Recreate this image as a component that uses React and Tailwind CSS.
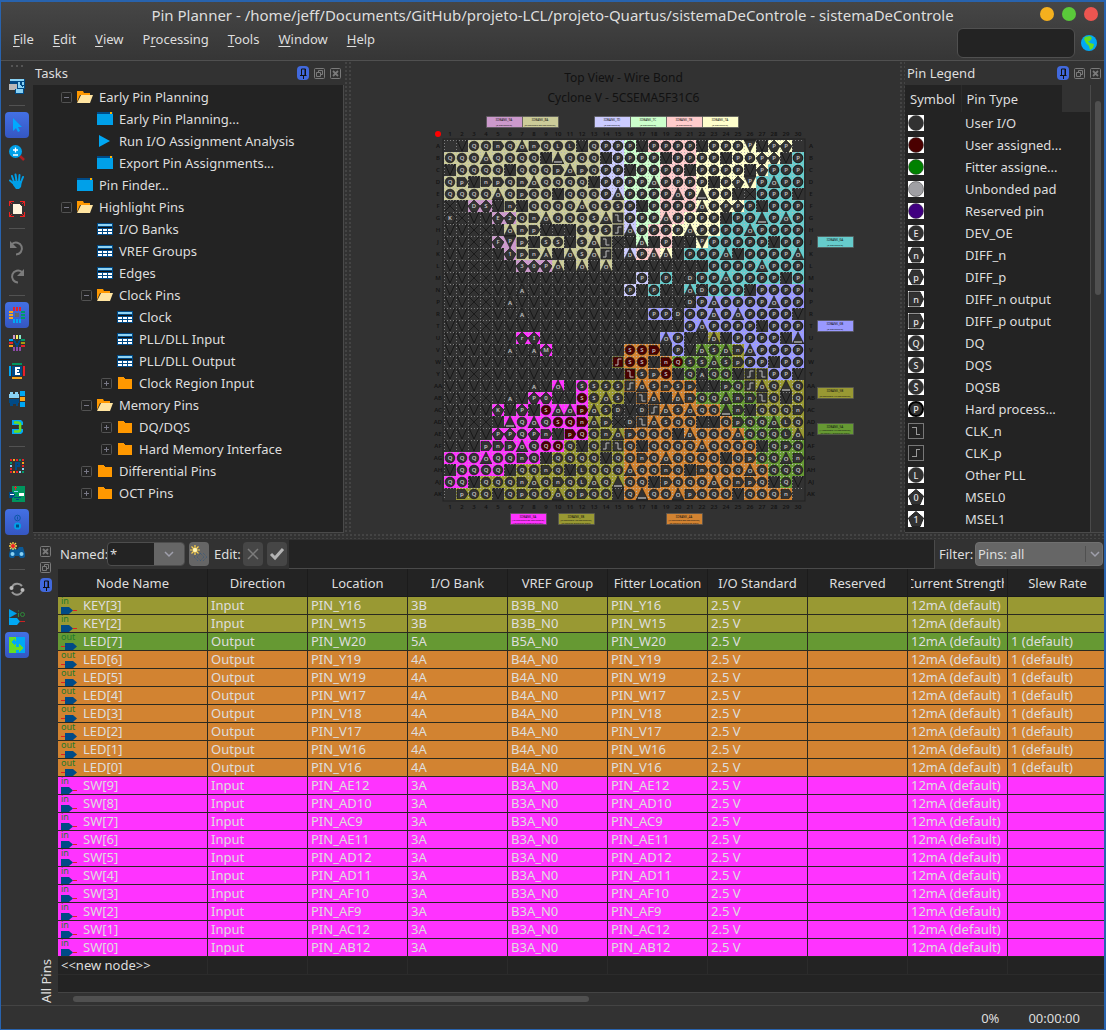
import React from "react";

const FONT = "font-['Noto_Sans','Open_Sans',sans-serif]";

/* ---------- Package view data ---------- */

const ROW_NAMES = "A B C D E F G H J K L M N P R T U V W Y AA AB AC AD AE AF AG AH AJ AK".split(" ");

const BANK_COLORS = {
  k: "#cccc99", m: "#cc99cc", l: "#ccccff", g: "#ccffcc", r: "#ffcccc", y: "#ffffcc",
  t: "#66cccc", b: "#9999ff", o: "#d28331", G: "#669933", O: "#999933", M: "#ff33ff",
};

const PINS = [
  "_vQQnQqnQLLvQPPPvPPPPvPPPuvHH_",
  "QQQqQQQQv^QQQvPPPPvPPPPvPPHHvP",
  "vQQQQvQQQpqpQPPvPPPPvPPPPvHPPP",
  "QpvnpQnqQQQQvPPPPqPPPPvPHuPqPP",
  "QQQQqQpQQvQQQPqPPPPqP^PPvxPPPv",
  "xvDTvnvQQQQqQSSPvPPPPqPHHPvPPP",
  "KxvvE2QnqQQQSqzPPPqPPPPvPP^PqP",
  "vvxxvqnpvvvSSScqPPPPqPPPPqPPPP",
  "vvxxFupvSSvSqzxvdvPvvuPPPPPvPP",
  "vvxxv1pnavqSqcvdPddvPPPqvPPPPq",
  "vvxxvv30HqvqvqvvvvvvvvPPPPqPPP",
  "vvxxvvvvvvvvvvvvPvPvDPPqPPPPvP",
  "vvxxvvavvvvvvvvPvPvvqDPPPvPPPP",
  "vvxxvavvvvvvvvvvvvvvDPqPPPPqPP",
  "vvxxvvavvvvvvvvvvPPDPPdPqPPPPv",
  "vvxxvvvvvvvvvvvvvvvvPqPPPPvPPP",
  "vvvvvvCIvvvvvvvvvvqPvvdvPPPPv^",
  "vvvvvavaMvvvvvvSSpvPvdSdnqPPPP",
  "vvvvvvvvvvvvvvcSSvnQSSqSpPPvPP",
  "vvxxvvvvvvvvvvvzSpSvQaQQvczPPv",
  "vvvvvvvavqvSSSScqSnSpvvpQcqQ^Q",
  "vvxxvavH0vvSSqSvzdvdnQQqnnzQvQ",
  "vvvvKvHvSqqpqSDvDcdSqQQ^nvQQQn",
  "vvxxv^QqQSQnqpxDzqSQQvvQpQQqLQ",
  "vvvvHHQHnvpQQnqpQQQvdQQQqQQQLq",
  "vvvpnpqQQQQvQczQvQQQQqQQQQvQpQ",
  "QQQqQQnQvQQQQvQQnQqQQQQvQpQQqn",
  "vQQQQvQQnQvLQQQqQQnQvnQQQqQQQQ",
  "QQvQQQnqQnQLqQ^QQvpQQQqQnpQvQv",
  "_pQQvQpQQqQpQQvQ^QQqpQQQvQQQn_",
];

const BANKS = [
  ".kkkkkkkkkkkkllggrrrryyyyyyyy.",
  "kkkkkkkkkkkkkllgggrrryyyyyyyyt",
  "kkkkkkkkkkkkkllgggrrryyyyyyttt",
  "kkkkkkkkkkkkkllgggrrryyyyytttt",
  "kkkkkkkkkkkkkllgggrrryyyy.tttt",
  "..mm.kkkkkkkkkklggrrryyyyttttt",
  "....mmkkkkkkkkklggrryyyytttttt",
  ".....kkkkkkkkkklgrryyyyttttttt",
  "....mmkkkk.kkk..g.r..ytttttttt",
  ".....mkkk.kkkk.lrry.tttttttttt",
  "......mmmk.k.k........tttttttt",
  "................l.t..ttttttttt",
  "...............l.t..t.ttttbbbb",
  ".....................bbbbbbbbb",
  ".................bb.bbbbbbbbbb",
  "....................bbbbbbbbbb",
  "......MM..........bb..O.bbbbbb",
  "........M......ooo.b.GGGObbbbb",
  "..............OooooGGGGGObbbbb",
  "...............Oooo.G.GG.OObbb",
  ".........M.MOOOoooooo..GGOOOOO",
  ".......MM..MOOO.oooooGGGGGOOOO",
  "....M.M.MMMMOO...ooooooGGGOOOO",
  ".....MMMMMMMOO..ooooo..oGGGGOO",
  "....MMMMMMMMOOOooooooooooGGGGO",
  "...MMMMMMMOOOOOoooooooooooGGGG",
  "MMMMMMMMOOOOOOOoooooooooooGGGG",
  ".MMMMOOOOOOOOOOooooooooooooGGG",
  "MMMOOOOOOOOOOOOooooooooooooGGG",
  ".OOOOOOOOOOOOOOoooooooooooooo.",
];

const ASSIGNED = new Set(
  "V16 V17 V18 W15 W16 W17 W19 W20 Y16 Y19 AB12 AC9 AC12 AD10 AD11 AD12 AE11 AE12 AF9 AF10".split(" ")
);

const DIAMONDS = { D: "D", T: "S", E: "E", F: "F", H: "P", C: "r", I: "I", M: "M", K: "K", 0: "0", 1: "1", 2: "2", 3: "3" };

function PinLetter({ x, y, children }) {
  return (
    <text x={x + 6} y={y + 8} fontSize="6" fontWeight="600" textAnchor="middle" fill="#c4c4c4">
      {children}
    </text>
  );
}

function Pin({ x, y, kind, color, assigned }) {
  const fill = assigned ? "#4a0000" : "#323232";
  const dark = color === undefined || kind === "v" || kind === "x" || kind === "_";
  const bg = dark ? "#323232" : color;
  let mark = null;
  if (kind === "v") {
    mark = <path d={`M${x + 1} ${y}L${x + 6} ${y + 11}L${x + 11} ${y}`} fill="none" stroke="#111" strokeWidth="0.8" />;
  } else if (kind === "x") {
    mark = <path d={`M${x + 1} ${y + 1}l10 10M${x + 11} ${y + 1}l-10 10`} stroke="#111" strokeWidth="0.7" />;
  } else if (kind === "q" || kind === "d" || kind === "a" || kind === "^") {
    const letter = { q: "O", d: "D", a: "A" }[kind];
    mark = (
      <>
        <path d={`M${x} ${y + 12}L${x + 6} ${y}L${x + 12} ${y + 12}z`} fill={fill} stroke="#111" strokeWidth="0.6" />
        {letter ? <PinLetter x={x} y={y + 1}>{letter}</PinLetter> : <rect x={x + 2} y={y + 9} width="8" height="2" fill="#888" />}
      </>
    );
  } else if (kind === "u") {
    mark = (
      <>
        <path d={`M${x} ${y}L${x + 6} ${y + 12}L${x + 12} ${y}z`} fill={fill} stroke="#111" strokeWidth="0.6" />
        <PinLetter x={x} y={y - 1}>P</PinLetter>
      </>
    );
  } else if (kind === "z" || kind === "c") {
    mark = (
      <>
        <rect x={x + 1} y={y + 1} width="10" height="10" fill={fill} stroke="#222" strokeWidth="0.8" />
        <path d={kind === "z" ? `M${x + 3} ${y + 3}h3v6h3.500` : `M${x + 3} ${y + 9}h3v-6h3.500`} fill="none" stroke="#bbb" />
      </>
    );
  } else if (kind === "n" || kind === "p") {
    mark = (
      <>
        <path d={`M${x + 1} ${y + 1.5}h8l3 4.500l-3 4.500h-8z`} fill={fill} stroke="#111" strokeWidth="0.6" />
        <PinLetter x={x} y={y}>{kind}</PinLetter>
      </>
    );
  } else if (DIAMONDS[kind]) {
    mark = (
      <>
        <path d={`M${x + 6} ${y}L${x + 12} ${y + 6}L${x + 8.5} ${y + 12}h-5L${x} ${y + 6}z`} fill={fill} stroke="#111" strokeWidth="0.6" />
        <PinLetter x={x} y={y}>{DIAMONDS[kind]}</PinLetter>
      </>
    );
  } else if (kind !== "_") {
    mark = (
      <>
        <circle cx={x + 6} cy={y + 6} r="4.800" fill={fill} stroke="#151515" strokeWidth={kind === "P" ? 1 : 0.7} />
        <PinLetter x={x} y={y}>{kind}</PinLetter>
      </>
    );
  }
  return (
    <g>
      <rect x={x} y={y} width="12" height="12" fill={bg} />
      <path d={`M${x} ${y + 0.5}h12M${x + 0.5} ${y}v12`} stroke={dark ? "#808080" : "#b4b4b4"} strokeDasharray="1 2" />
      {mark}
    </g>
  );
}

const BANK_LABELS = [
  [92, 4, "m", "9A", "(0 assignable)"],
  [128, 4, "k", "8A", "(0 assigned/80 assignable)"],
  [200, 4, "l", "7D", "(0 assignable)"],
  [236, 4, "g", "7C", "(0 assignable)"],
  [272, 4, "r", "7B", "(0 assignable)"],
  [308, 4, "y", "7A", "(0 assignable)"],
  [423, 124, "t", "6A", "(0 assignable)"],
  [423, 208, "b", "6B", "(0 assignable)"],
  [423, 275, "O", "5B", "(0 assigned/16 assignable)"],
  [423, 311, "G", "5A", "(1 assigned/16 assignable)", "(0 input/1 output/0 bidir)"],
  [116, 401, "M", "3A", "(10 assigned/32 assignable)", "(10 input/0 output/0 bidir)"],
  [164, 401, "O", "3B", "(2 assigned/48 assignable)", "(2 input/0 output/0 bidir)"],
  [272, 401, "o", "4A", "(7 assigned/80 assignable)", "(0 input/7 output/0 bidir)"],
];

function PackageView() {
  return (
    <svg viewBox="0 0 460 418" className="h-[418px] w-[460px] shrink-0" role="img" aria-label="Package top view">
      {BANK_LABELS.map(([x, y, c, name, ...lines]) => (
        <g key={name}>
          <rect x={x + 0.5} y={y + 0.5} width="36" height="11" fill={BANK_COLORS[c]} stroke="#555" strokeWidth="0.7" />
          <text x={x + 18} y={y + 4.5} fontSize="3" textAnchor="middle" fill="#111">{"IOBANK_" + name}</text>
          {lines.map((line, i) => (
            <text key={line} x={x + 18} y={y + (lines.length > 1 ? 7.5 : 9.5) + i * 3} fontSize="2.500" textAnchor="middle" fill="#111">
              {line}
            </text>
          ))}
        </g>
      ))}
      <circle cx="44" cy="22" r="3" fill="#ff0000" />
      <rect x="49" y="27" width="362" height="362" fill="#323232" stroke="#222" />
      {ROW_NAMES.map((name, i) => (
        <g key={name} fontSize="6" fontWeight="600" textAnchor="middle" fill="#141414">
          <text x={56 + i * 12} y="24">{i + 1}</text>
          <text x={56 + i * 12} y="397">{i + 1}</text>
          <text x="44" y={36 + i * 12}>{name}</text>
          <text x="417" y={36 + i * 12}>{name}</text>
        </g>
      ))}
      {PINS.map((line, r) =>
        [...line].map((kind, c) => (
          <Pin
            key={r + "-" + c}
            x={50 + c * 12}
            y={28 + r * 12}
            kind={kind}
            color={BANK_COLORS[BANKS[r][c]]}
            assigned={ASSIGNED.has(ROW_NAMES[r] + (c + 1))}
          />
        ))
      )}
    </svg>
  );
}

/* ---------- Icons ---------- */

function Ico({ children, className = "h-4 w-4", crisp = true }) {
  return (
    <svg viewBox="0 0 16 16" className={className + " shrink-0"} shapeRendering={crisp ? "crispEdges" : "auto"} aria-hidden="true">
      {children}
    </svg>
  );
}

const FolderOpen = () => (
  <Ico crisp={false}>
    <path d="M0 2h6l1 2h6v2H3L0 13z" fill="#ff9800" />
    <path d="M4 6h12l-3 8H0z" fill="#ffe4a0" />
  </Ico>
);
const Folder = () => (
  <Ico><path d="M1 2h6l1 2h7v10H1z" fill="#ff9800" /></Ico>
);
const Dialog = () => (
  <Ico>
    <rect y="1" width="16" height="13" fill="#00a0e9" />
    <rect y="1" width="16" height="2" fill="#004a86" />
    <rect x="13" y="1" width="2" height="2" fill="#ffb000" />
  </Ico>
);
const Play = () => (
  <Ico crisp={false}><path d="M2 2l11 6-11 6z" fill="#00a8f4" /></Ico>
);
const Grid = () => (
  <Ico>
    <rect y="2" width="16" height="12" fill="#004a86" />
    <path d="M1 3h14v2H1z" fill="#90d4f4" />
    <path d="M1 6h14v1H1z" fill="#111" />
    <path d="M1 8h4v2H1zM6 8h4v2H6zM11 8h4v2h-4zM1 11h4v2H1zM6 11h4v2H6zM11 11h4v2h-4z" fill="#fff" />
  </Ico>
);

const TOOL_ICONS = {
  "Detach window": (
    <Ico>
      <path d="M1 1h15v10H1z" fill="#004a86" /><path d="M1 1h14v2H1zM9 4h6v6H9z" fill="#8ad2f4" />
      <path d="M0 6h8v6H0z" fill="#b8b8b8" /><path d="M7 3h5v1h1v3h2v1h-1v1h-1V8h-1V7h-1V4H7z" fill="#004a86" />
      <path d="M6 11h9v5H6z" fill="#004a86" /><path d="M7 11h7v4H7z" fill="#8ad2f4" />
    </Ico>
  ),
  "Selection tool": <Ico crisp={false}><path d="M4 1v13l3-3 2 4 2-1-2-4h4z" fill="#00a8ff" /></Ico>,
  "Zoom tool": (
    <Ico crisp={false}>
      <path d="M11 11l4 4" stroke="#b02020" strokeWidth="2.500" /><circle cx="6.500" cy="6.500" r="6.500" fill="#00a0e9" />
      <path d="M4 5h5M6.500 2.500v5M4 10h5" stroke="#fff" strokeWidth="1.300" />
    </Ico>
  ),
  "Hand tool": (
    <Ico crisp={false}>
      <g stroke="#00a0e9" strokeWidth="2" strokeLinecap="round"><path d="M5 9L3 3M7.500 8L6.500 1.500M10 8l.5-6M12 9l2-5M5 11L1 7.500" /></g>
      <path d="M4 8h9l-1 6-2 2H7l-3-4z" fill="#00a0e9" />
    </Ico>
  ),
  "Fit in window": (
    <Ico>
      <path d="M4 3h6l3 3v7H4z" fill="#fff3dc" />
      <path d="M0 0h5v1H2v1h1v1H2V2H1v3H0zM16 0h-5v1h3v1h-1v1h1V2h1v3h1zM0 16h5v-1H2v-1h1v-1H2v1H1v-3H0zM16 16h-5v-1h3v-1h-1v-1h1v1h1v-3h1z" fill="#e22" />
    </Ico>
  ),
  Undo: <Ico crisp={false}><path d="M3 4a6 6 0 1 1 4 10.500" fill="none" stroke="#7b7b7b" strokeWidth="2" /><path d="M1 1v7h7z" fill="#7b7b7b" /></Ico>,
  Redo: <Ico crisp={false}><path d="M13 4a6 6 0 1 0-4 10.500" fill="none" stroke="#7b7b7b" strokeWidth="2" /><path d="M15 1v7H8z" fill="#7b7b7b" /></Ico>,
  "Show I/O banks": (
    <Ico>
      <path d="M4 0h2v4H4zM7 0h2v4H7zM10 0h2v4h-2z" fill="#e8202a" /><path d="M4 12h2v4H4zM7 12h2v4H7zM10 12h2v4h-2z" fill="#00a8f4" />
      <path d="M0 4h4v2H0zM0 7h4v2H0zM0 10h4v2H0z" fill="#f9a51a" /><path d="M12 4h4v2h-4zM12 7h4v2h-4zM12 10h4v2h-4z" fill="#009a6a" />
      <path d="M6 6h4v4H6z" fill="#666" />
    </Ico>
  ),
  "Show VREF groups": (
    <Ico>
      <path d="M4 0h2v4H4z" fill="#c9c" /><path d="M7 0h2v4H7z" fill="#fe6" /><path d="M10 0h2v4h-2z" fill="#8ec" />
      <path d="M4 12h2v4H4zM7 12h2v4H7zM10 12h2v4h-2z" fill="#8e4aa8" /><path d="M0 4h4v2H0z" fill="#00a8f4" />
      <path d="M0 7h4v2H0z" fill="#e8202a" /><path d="M0 10h4v2H0z" fill="#f9a51a" /><path d="M12 4h4v2h-4z" fill="#009a6a" />
      <path d="M12 7h4v2h-4z" fill="#aa9a10" /><path d="M12 10h4v2h-4z" fill="#e8202a" /><path d="M5 5l3 6 3-6" fill="none" stroke="#004a86" strokeWidth="1.500" />
    </Ico>
  ),
  "Show edges": (
    <Ico>
      <path d="M3 0h10v2H3z" fill="#00965e" /><path d="M3 14h10v2H3z" fill="#f9a51a" /><path d="M0 3h2v10H0z" fill="#00a8f4" />
      <path d="M14 3h2v10h-2z" fill="#e8202a" /><path d="M3 3h10v10H3z" fill="#004a86" /><path d="M6 4h5v2H8v1h2v2H8v1h3v2H6z" fill="#fff" />
    </Ico>
  ),
  "Show DQ/DQS pins": (
    <Ico>
      <path d="M1 1h3v2h2V1h3v2h1v4H0V3h1z" fill="#8ad2f4" /><path d="M0 8h10v4H9v3H7v-2H4v2H1v-3H0z" fill="#004a86" />
      <path d="M11 0h5v5h-5zM11 11h5v5h-5z" fill="#00a8f4" /><path d="M11 6h5v4h-5z" fill="#f9a51a" />
    </Ico>
  ),
  "Show pin connections": (
    <Ico crisp={false}>
      <path d="M3 1h9l2 2v3H3zM3 10h11v3l-2 2H3z" fill="#00a8f4" />
      <path d="M5 3.500h4q3 0 2 4.500q1 4.500-2 4.500H5" fill="none" stroke="#66dd22" strokeWidth="2.500" />
    </Ico>
  ),
  "Show pin migration": (
    <Ico>
      <path d="M1 1h2v2H1zM7 1h2v2H7zM13 1h2v2h-2zM13 7h2v2h-2zM1 10h2v2H1zM7 13h2v2H7zM1 13h2v2H1z" fill="#e8202a" />
      <path d="M4 1h2v2H4zM13 4h2v2h-2zM4 13h2v2H4z" fill="#f9a51a" />
      <path d="M10 1h2v2h-2zM1 4h2v2H1zM13 13h2v2h-2z" fill="#009a6a" />
      <path d="M1 7h2v2H1zM13 10h2v2h-2zM10 13h2v2h-2z" fill="#8ad2f4" />
      <path d="M6 4h5v5H8v3H6z" fill="#004a86" /><path d="M8 6h1v1H8z" fill="#323232" />
    </Ico>
  ),
  "Live I/O check": (
    <Ico>
      <path d="M3 0h13v16H3z" fill="#00965e" /><path d="M5 1h3v1H5zM6 0h1v4H6z" fill="#e8202a" /><path d="M0 6h3l3 3-3 3H0z" fill="#004a86" />
      <path d="M1 8h4v1H1zM10 7h5v3h-5z" fill="#fff" /><path d="M5 11h7v1H5zM7 13h3v1H7z" fill="#004a86" /><path d="M5 5h4v1H5z" fill="#8ad2f4" />
    </Ico>
  ),
  "Show differential pin pairs": (
    <Ico crisp={false}>
      <circle cx="8.500" cy="4" r="2.800" fill="none" stroke="#0a58a8" /><path d="M8.500 2.500v3" stroke="#0a58a8" />
      <circle cx="8.500" cy="12" r="3.500" fill="#00a0e9" /><path d="M7 10.500h3v3H7z" fill="#004a86" />
    </Ico>
  ),
  "Node finder": (
    <Ico crisp={false}>
      <path d="M2 5h4l2 3 2-3h4l2 7a3 3 0 0 1-6 2H6a3 3 0 0 1-6-2z" fill="#0a5a98" />
      <circle cx="3.500" cy="12" r="2" fill="#8ad2f4" /><circle cx="12.500" cy="12" r="2" fill="#8ad2f4" />
      <path d="M4 0v8M0 4h8M1 1l6 6M7 1L1 7" stroke="#ffd34a" strokeWidth="1.300" /><circle cx="4" cy="4" r="2" fill="#e8202a" />
    </Ico>
  ),
  Refresh: (
    <Ico crisp={false}>
      <path d="M3 6a6 6 0 0 1 10-1M13 11a6 6 0 0 1-10 0" fill="none" stroke="#999" strokeWidth="2" />
      <circle cx="2.500" cy="7" r="2" fill="#bbb" /><circle cx="13.500" cy="9" r="2" fill="#bbb" />
    </Ico>
  ),
  "Show fitter placements": (
    <Ico crisp={false}>
      <path d="M0 0l8 4.500L0 9z" fill="#00a0e9" /><path d="M0 9h8l3 3.500-3 3.500H0z" fill="#00a8f4" /><path d="M11 12.500h5" stroke="#c22" />
      <path d="M9.500 4v4M9.500 1.500v1" stroke="#2e8b3a" /><circle cx="13.500" cy="5.500" r="2" fill="none" stroke="#2e8b3a" />
    </Ico>
  ),
  "Back-annotate": (
    <Ico>
      <path d="M0 0h16v16H0z" fill="#00a8f4" /><path d="M0 0h7v16H0z" fill="#66dd22" />
      <path d="M2 5l4-4v3h3v3H6v2z" fill="#00a8f4" /><path d="M14 11l-4-4v3H6v3h4v2z" fill="#66dd22" />
    </Ico>
  ),
};

const TOOLBAR = [
  "Detach window", null, "Selection tool", "Zoom tool", "Hand tool", "Fit in window", null, "Undo", "Redo", null,
  "Show I/O banks", "Show VREF groups", "Show edges", "Show DQ/DQS pins", "Show pin connections", null,
  "Show pin migration", "Live I/O check", "Show differential pin pairs", "Node finder", null,
  "Refresh", "Show fitter placements", "Back-annotate",
];
const ACTIVE = new Set(["Selection tool", "Show I/O banks", "Show differential pin pairs", "Back-annotate"]);

const PinButton = () => (
  <button type="button" aria-label="Pin panel" className="flex h-3.5 w-3 items-center justify-center rounded-sm bg-[#4169dd]">
    <svg viewBox="0 0 12 14" className="h-3.5 w-3" aria-hidden="true">
      <path d="M4.500 9V3h4v6M3 9.500h6.500M6.500 9.500V13" fill="none" stroke="#101010" /><path d="M8 3v6" stroke="#101010" />
    </svg>
  </button>
);
const FloatButton = () => (
  <button type="button" aria-label="Float panel" className="h-[11px] w-[11px]">
    <svg viewBox="0 0 11 11" className="block" aria-hidden="true">
      <rect x=".5" y=".5" width="10" height="10" rx="1" fill="none" stroke="#7a7a7a" />
      <path d="M4.500 4V2.500h4v4H7M2.500 4.500h4v4h-4z" fill="none" stroke="#7a7a7a" />
    </svg>
  </button>
);
const CloseButton = () => (
  <button type="button" aria-label="Close panel" className="h-[11px] w-[11px]">
    <svg viewBox="0 0 11 11" className="block" aria-hidden="true">
      <rect x=".5" y=".5" width="10" height="10" rx="1" fill="none" stroke="#7a7a7a" />
      <path d="M3 3l5 5M8 3l-5 5" stroke="#7a7a7a" strokeWidth="1.800" />
    </svg>
  </button>
);

function PanelTitle({ children }) {
  return (
    <div className="flex h-6 items-center justify-between pr-[3px] pl-0.5">
      <h2>{children}</h2>
      <div className="flex items-center gap-[5px]">
        <PinButton /><FloatButton /><CloseButton />
      </div>
    </div>
  );
}

/* ---------- Tasks ---------- */

const TASKS = [
  [0, "-", "Early Pin Planning"], [1, "dialog", "Early Pin Planning..."], [1, "play", "Run I/O Assignment Analysis"],
  [1, "dialog", "Export Pin Assignments..."], [0, "dialog", "Pin Finder..."], [0, "-", "Highlight Pins"],
  [1, "grid", "I/O Banks"], [1, "grid", "VREF Groups"], [1, "grid", "Edges"], [1, "-", "Clock Pins"],
  [2, "grid", "Clock"], [2, "grid", "PLL/DLL Input"], [2, "grid", "PLL/DLL Output"], [2, "+", "Clock Region Input"],
  [1, "-", "Memory Pins"], [2, "+", "DQ/DQS"], [2, "+", "Hard Memory Interface"],
  [1, "+", "Differential Pins"], [1, "+", "OCT Pins"],
];
const TASK_ICONS = { "-": <FolderOpen />, "+": <Folder />, dialog: <Dialog />, play: <Play />, grid: <Grid /> };
const INDENTS = ["pl-7", "pl-12", "pl-[68px]"];

function Expander({ kind, name }) {
  return (
    <button type="button" aria-label={(kind === "-" ? "Collapse " : "Expand ") + name} className="h-[11px] w-[11px] shrink-0">
      <svg viewBox="0 0 11 11" className="block" aria-hidden="true">
        <rect x=".5" y=".5" width="10" height="10" rx="1" fill="none" stroke="#525252" />
        <path d={kind === "-" ? "M3 5.500h5" : "M3 5.500h5M5.500 3v5"} stroke="#777785" />
      </svg>
    </button>
  );
}

function Tasks() {
  return (
    <section className="flex w-[311px] shrink-0 flex-col">
      <PanelTitle>Tasks</PanelTitle>
      <ul className="flex-1 border-r border-b border-[#4a4a4a] bg-[#232323] pt-px">
        {TASKS.map(([level, kind, name]) => (
          <li key={name} className={"flex h-[22px] items-center " + INDENTS[level]}>
            {kind === "-" || kind === "+" ? <Expander kind={kind} name={name} /> : <span className="w-[11px]" />}
            <span className="ml-[5px] flex">{TASK_ICONS[kind]}</span>
            <span className="ml-1.5">{name}</span>
          </li>
        ))}
      </ul>
    </section>
  );
}

/* ---------- Legend ---------- */

const LEGEND = [
  ["circle", "", "User I/O"], ["circle", "", "User assigned...", "#4a0000"], ["circle", "", "Fitter assigne...", "#008000"],
  ["circle", "", "Unbonded pad", "#a0a0a4"], ["circle", "", "Reserved pin", "#400080"], ["circle", "E", "DEV_OE"],
  ["hex", "n", "DIFF_n"], ["hex", "p", "DIFF_p"], ["tag", "n", "DIFF_n output"], ["tag", "p", "DIFF_p output"],
  ["circle", "Q", "DQ"], ["circle", "S", "DQS"], ["circle", "S\u0304", "DQSB"], ["ring", "P", "Hard process..."],
  ["clkn", "", "CLK_n"], ["clkp", "", "CLK_p"], ["circle", "L", "Other PLL"], ["penta", "0", "MSEL0"], ["penta", "1", "MSEL1"],
];

function LegendSymbol({ shape, letter, fill = "#323232" }) {
  if (shape === "clkn" || shape === "clkp") {
    return (
      <Ico className="block h-4 w-4">
        <rect x=".5" y=".5" width="15" height="15" fill="#232323" stroke="#777" />
        <path d={shape === "clkn" ? "M4 4.500h4v7h4" : "M4 11.500h4v-7h4"} fill="none" stroke="#999" />
      </Ico>
    );
  }
  const paths = { hex: "M4 1h8l3.500 7-3.500 7H4L.5 8z", tag: "M1 1h11l3.500 7-3.500 7H1z", penta: "M8 .5L15.500 7 12 15.500H4L.5 7z" };
  return (
    <Ico className="block h-4 w-4" crisp={false}>
      <rect width="16" height="16" fill="#fff" />
      {paths[shape] ? (
        <path d={paths[shape]} fill={fill} stroke="#222" />
      ) : (
        <circle cx="8" cy="8" r={shape === "ring" ? 7 : 7.5} fill={fill} stroke={shape === "ring" ? "#000" : "#333"} strokeWidth={shape === "ring" ? 2 : 0.5} />
      )}
      <text x="8" y="11.500" fontSize="9" fontWeight="500" textAnchor="middle" fill="#e8e8e8">{letter}</text>
    </Ico>
  );
}

function Legend() {
  return (
    <section className="flex w-[199px] shrink-0 flex-col">
      <PanelTitle>Pin Legend</PanelTitle>
      <div className="flex flex-1 border-b border-[#4a4a4a]">
        <div className="flex-1 border-r border-[#4a4a4a] bg-[#232323]">
          <table className="w-full table-fixed">
            <colgroup><col className="w-14" /><col className="w-[101px]" /><col /></colgroup>
            <thead>
              <tr className="h-[27px] text-left">
                <th className="border-r border-[#2b2b2b] pl-[5px] font-normal">Symbol</th>
                <th className="pl-[5px] font-normal">Pin Type</th>
                <th className="bg-[#323232]"><span className="sr-only">Notes</span></th>
              </tr>
            </thead>
            <tbody>
              {LEGEND.map(([shape, letter, name, fill]) => (
                <tr key={name} className="h-[22px]">
                  <td className="pl-[3px]"><LegendSymbol shape={shape} letter={letter} fill={fill} /></td>
                  <td className="pl-1 whitespace-nowrap" colSpan={2}>{name}</td>
                </tr>
              ))}
            </tbody>
          </table>
        </div>
        <div className="w-[13px] pt-4 pl-1">
          <div className="h-[194px] w-1.5 rounded-full bg-[#505050]" />
        </div>
      </div>
    </section>
  );
}

/* ---------- All pins table ---------- */

const row = (name, dir, loc, bank) => ({ name, dir, loc, bank });
const NODES = [
  row("KEY[3]", "Input", "PIN_Y16", "3B"), row("KEY[2]", "Input", "PIN_W15", "3B"),
  row("LED[7]", "Output", "PIN_W20", "5A"), row("LED[6]", "Output", "PIN_Y19", "4A"),
  row("LED[5]", "Output", "PIN_W19", "4A"), row("LED[4]", "Output", "PIN_W17", "4A"),
  row("LED[3]", "Output", "PIN_V18", "4A"), row("LED[2]", "Output", "PIN_V17", "4A"),
  row("LED[1]", "Output", "PIN_W16", "4A"), row("LED[0]", "Output", "PIN_V16", "4A"),
  row("SW[9]", "Input", "PIN_AE12", "3A"), row("SW[8]", "Input", "PIN_AD10", "3A"),
  row("SW[7]", "Input", "PIN_AC9", "3A"), row("SW[6]", "Input", "PIN_AE11", "3A"),
  row("SW[5]", "Input", "PIN_AD12", "3A"), row("SW[4]", "Input", "PIN_AD11", "3A"),
  row("SW[3]", "Input", "PIN_AF10", "3A"), row("SW[2]", "Input", "PIN_AF9", "3A"),
  row("SW[1]", "Input", "PIN_AC12", "3A"), row("SW[0]", "Input", "PIN_AB12", "3A"),
];
const ROW_BG = { "3B": "bg-[#999933]", "5A": "bg-[#669933]", "4A": "bg-[#d28331]", "3A": "bg-[#ff33ff]" };
const COLUMNS = ["Node Name", "Direction", "Location", "I/O Bank", "VREF Group", "Fitter Location", "I/O Standard", "Reserved", "Current Strength", "Slew Rate"];

function DirIcon({ dir }) {
  const out = dir === "Output";
  return (
    <svg viewBox="0 0 18 17" className="h-[17px] w-[18px] shrink-0" aria-hidden="true">
      <text x="0" y="7" fontSize="9" fill="#1f7a2c">{out ? "out" : "in"}</text>
      <path d={out ? "M4 10h8l4 3.500-4 3.500H4z" : "M0 10h8l4 3.500-4 3.500H0z"} fill="#004a86" />
      <path d={out ? "M0 13.500h4" : "M12 13.500h4"} stroke="#e02020" />
    </svg>
  );
}

function NodeTable() {
  return (
    <div className="overflow-hidden bg-[#232323]">
      <table className="w-[1050px] table-fixed border-separate border-spacing-0">
        <colgroup>
          <col className="w-[150px]" />
          {COLUMNS.slice(1).map((c) => <col key={c} className="w-[100px]" />)}
        </colgroup>
        <thead>
          <tr className="h-7">
            {COLUMNS.map((c) => (
              <th key={c} className="overflow-hidden border-r border-b border-[#1b1b1b] p-0 font-normal whitespace-nowrap">
                <span className="mx-[3px] flex justify-center overflow-hidden">{c}</span>
              </th>
            ))}
          </tr>
        </thead>
        <tbody className="text-[#dedede]">
          {NODES.map((n) => (
            <tr key={n.name} className={"h-[18px] leading-[17px] *:overflow-hidden *:border-r *:border-b *:border-[#2a2a20] *:p-0 *:pl-[3px] *:whitespace-nowrap " + ROW_BG[n.bank]}>
              <td><span className="flex h-[17px] items-center gap-1"><DirIcon dir={n.dir} />{n.name}</span></td>
              <td>{n.dir}</td>
              <td>{n.loc}</td>
              <td>{n.bank}</td>
              <td>{"B" + n.bank + "_N0"}</td>
              <td>{n.loc}</td>
              <td>2.5 V</td>
              <td />
              <td>12mA (default)</td>
              <td>{n.dir === "Output" ? "1 (default)" : ""}</td>
            </tr>
          ))}
          <tr className="h-[18px] leading-[17px] *:border-r *:border-b *:border-[#2b2b2b] *:p-0 *:pl-[3px]">
            <td>{"<<new node>>"}</td>
            {COLUMNS.slice(1).map((c) => <td key={c} />)}
          </tr>
        </tbody>
      </table>
    </div>
  );
}

const SMALL_BUTTON = "flex h-6 w-5 items-center justify-center rounded bg-[#464646]";

function EditBar() {
  return (
    <div className="flex h-[30px] items-center">
      <label htmlFor="named" className="ml-0.5 w-[47px]">Named:</label>
      <div className="flex h-6 w-[78px] overflow-hidden rounded border border-[#4d4d4d] bg-[#232323]">
        <input id="named" defaultValue="*" className="min-w-0 flex-1 bg-transparent pl-0.5 outline-none" />
        <button type="button" aria-label="Show name filters" className="flex w-[30px] items-center justify-center bg-[#666]">
          <svg viewBox="0 0 10 7" className="h-[7px] w-2.5" aria-hidden="true"><path d="M1 1l4 4 4-4" fill="none" stroke="#a0a0ac" strokeWidth="1.500" /></svg>
        </button>
      </div>
      <button type="button" aria-label="Node finder" className="ml-1 flex h-6 w-5 items-center justify-center rounded bg-[#666]">
        <svg viewBox="0 0 18 18" className="h-[18px] w-[18px]" aria-hidden="true">
          <path d="M8 8l-4 4 4 4M11 8l-4 4 4 4M10 8l4 4-4 4M13 8l4 4-4 4" fill="none" stroke="#3d5a78" strokeDasharray="1 1" />
          <path d="M5 0v10M0 5h10M1.500 1.500l7 7M8.500 1.500l-7 7" stroke="#ffd34a" strokeWidth="1.200" /><circle cx="5" cy="5" r="2" fill="#fff8c0" />
        </svg>
      </button>
      <label htmlFor="edit" className="ml-[5px] w-[29px]">Edit:</label>
      <button type="button" aria-label="Cancel edit" className={SMALL_BUTTON}>
        <svg viewBox="0 0 12 12" className="h-3 w-3" aria-hidden="true"><path d="M1 1l10 10M11 1L1 11" stroke="#7c7c7c" strokeWidth="1.500" /></svg>
      </button>
      <button type="button" aria-label="Accept edit" className={SMALL_BUTTON + " ml-1"}>
        <svg viewBox="0 0 16 14" className="h-3.5 w-4" aria-hidden="true"><path d="M2 7l4 4 8-9" fill="none" stroke="#b4b4b4" strokeWidth="3" /></svg>
      </button>
      <input id="edit" className="ml-0.5 h-[29px] min-w-0 flex-1 border-r border-b border-[#4a4a4a] bg-[#232323] outline-none" />
      <label htmlFor="filter" className="ml-1 w-9">Filter:</label>
      <div className="relative mr-px h-6 w-32">
        <select id="filter" className="h-6 w-full appearance-none rounded border border-[#707070] bg-[#666] pl-0.5 outline-none">
          <option>Pins: all</option>
        </select>
        <span className="pointer-events-none absolute inset-y-1 right-0 flex w-[18px] items-center justify-center border-l border-[#505050]">
          <svg viewBox="0 0 10 7" className="h-[7px] w-2.5" aria-hidden="true"><path d="M1 1l4 4 4-4" fill="none" stroke="#a0a0ac" strokeWidth="1.500" /></svg>
        </span>
      </div>
    </div>
  );
}

const MENU = [["", "F", "ile"], ["", "E", "dit"], ["", "V", "iew"], ["P", "r", "ocessing"], ["", "T", "ools"], ["", "W", "indow"], ["", "H", "elp"]];
const DOTS = "bg-[radial-gradient(#444_1px,transparent_1px)] bg-[size:4px_4px]";

export default function App() {
  return (
    <div className={"flex min-h-screen flex-col overflow-hidden border-t-2 border-r-2 border-b border-l border-[#2863ae] bg-[#323232] text-[13px] leading-[18px] text-[#dedede] " + FONT}>
      <header className="border-b border-[#505050] bg-linear-to-b from-[#464646] to-[#363636]">
        <div className="relative flex h-[25px] items-center justify-center">
          <h1 className="text-[15px]">Pin Planner - /home/jeff/Documents/GitHub/projeto-LCL/projeto-Quartus/sistemaDeControle - sistemaDeControle</h1>
          <div className="absolute top-[5px] right-1.5 flex gap-2">
            <button type="button" aria-label="Minimize" className="h-3.5 w-3.5 rounded-full bg-[#f4b01e]" />
            <button type="button" aria-label="Maximize" className="h-3.5 w-3.5 rounded-full bg-[#5ac93a]" />
            <button type="button" aria-label="Close" className="h-3.5 w-3.5 rounded-full bg-[#ec5550]" />
          </div>
        </div>
        <div className="flex h-[33px] items-start justify-between">
          <nav className="flex gap-[19px] pt-[3px] pl-3">
            {MENU.map(([pre, key, post]) => (
              <button key={key} type="button">{pre}<span className="underline underline-offset-2">{key}</span>{post}</button>
            ))}
          </nav>
          <div className="flex items-center gap-[6px] pt-px pr-[7px]">
            <input aria-label="Search" className="h-[30px] w-[118px] rounded-md border border-[#505050] bg-[#232323] px-2 outline-none" />
            <a href="#web" aria-label="Intel FPGA website">
              <Ico crisp={false}>
                <circle cx="8" cy="8" r="8" fill="#00a8f4" />
                <path d="M4 2l5-1 2 2-2 3H7l2 2 4 1-1 4-3 2-1-4-3-3-2-4z" fill="#66dd22" />
              </Ico>
            </a>
          </div>
        </div>
      </header>

      <div className="flex flex-1">
        <div role="toolbar" aria-label="Pin planner tools" className="flex w-8 shrink-0 flex-col items-center gap-0.5 pt-1">
          <div className="flex h-[6px] gap-[3px]">
            <i className="h-0.5 w-0.5 bg-[#555]" /><i className="h-0.5 w-0.5 bg-[#555]" /><i className="h-0.5 w-0.5 bg-[#555]" />
          </div>
          {TOOLBAR.map((name, i) =>
            name ? (
              <button
                key={name}
                type="button"
                aria-label={name}
                className={"flex h-[26px] w-6 items-center justify-center rounded " + (ACTIVE.has(name) ? "bg-linear-to-b from-[#4370e4] to-[#3557c2]" : "")}
              >
                {TOOL_ICONS[name]}
              </button>
            ) : (
              <div key={i} className="flex h-[9px] items-center"><div className="h-px w-4 bg-[#525252]" /></div>
            )
          )}
        </div>

        <div className="flex min-w-0 flex-1 flex-col">
          <div className="flex">
            <Tasks />
            <div className={"w-[7px] shrink-0 " + DOTS} />
            <main className="flex min-w-0 flex-1 flex-col items-center overflow-hidden pt-[7px] pr-[3px] pb-[3px] text-[12px] leading-5 text-[#111]">
              <p>Top View - Wire Bond</p>
              <p>Cyclone V - 5CSEMA5F31C6</p>
              <div className="mt-1 flex"><PackageView /></div>
            </main>
            <div className={"w-1.5 shrink-0 " + DOTS} />
            <Legend />
          </div>

          <div className={"h-[6px] " + DOTS} />

          <section className="flex flex-1">
            <div className="flex w-[25px] shrink-0 flex-col items-center gap-[5px] pt-[7px]">
              <CloseButton /><FloatButton /><PinButton />
              <h2 className="mt-auto mb-0.5 rotate-180 [writing-mode:vertical-rl]">All Pins</h2>
            </div>
            <div className="flex min-w-0 flex-1 flex-col">
              <EditBar />
              <NodeTable />
              <div className="flex-1 bg-[#232323]" />
              <div className="flex h-[13px] items-center border-t border-[#444] pl-[15px]">
                <div className="h-1.5 w-1/2 rounded-full bg-[#505050]" />
              </div>
            </div>
          </section>
        </div>
      </div>

      <footer className="flex h-6 items-center justify-end gap-[29px] border-t border-[#444] pr-6">
        <span>0%</span>
        <span>00:00:00</span>
      </footer>
    </div>
  );
}
